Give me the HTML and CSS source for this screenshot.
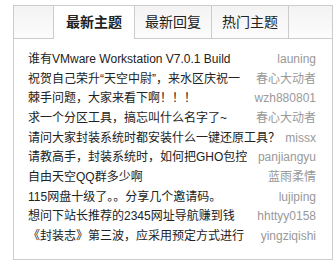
FILE: index.html
```html
<!DOCTYPE html>
<html lang="zh-CN">
<head>
<meta charset="utf-8">
<title>论坛主题</title>
<link rel="stylesheet" href="styles.css">
</head>
<body>
<div class="box">
  <div class="tabs">
    <div class="tab-spacer"></div>
    <div class="tab tab-first active">最新主题</div>
    <div class="tab">最新回复</div>
    <div class="tab">热门主题</div>
  </div>
  <ul class="list">
    <li class="row"><span class="title">谁有VMware Workstation V7.0.1 Build</span><span class="author">launing</span></li>
    <li class="row"><span class="title">祝贺自己荣升“天空中尉”，来水区庆祝一</span><span class="author">春心大动者</span></li>
    <li class="row"><span class="title">棘手问题，大家来看下啊！！！</span><span class="author">wzh880801</span></li>
    <li class="row"><span class="title">求一个分区工具，搞忘叫什么名字了~</span><span class="author">春心大动者</span></li>
    <li class="row"><span class="title">请问大家封装系统时都安装什么一键还原工具？</span><span class="author">missx</span></li>
    <li class="row"><span class="title">请教高手，封装系统时，如何把GHO包控</span><span class="author">panjiangyu</span></li>
    <li class="row"><span class="title">自由天空QQ群多少啊</span><span class="author">蓝雨柔情</span></li>
    <li class="row"><span class="title">115网盘十级了。。分享几个邀请码。</span><span class="author">lujiping</span></li>
    <li class="row"><span class="title">想问下站长推荐的2345网址导航赚到钱</span><span class="author">hhttyy0158</span></li>
    <li class="row"><span class="title">《封装志》第三波，应采用预定方式进行</span><span class="author">yingziqishi</span></li>
  </ul>
</div>
</body>
</html>
```

FILE: styles.css
```css
html, body {
  margin: 0;
  padding: 0;
  background: #fff;
}
body {
  font-family: "Liberation Sans", "Noto Sans CJK SC", sans-serif;
  font-size: 12px;
  color: #222;
}
.box {
  width: 318px;
  height: 253px;
  margin: 5px 0 0 13px;
  border: 1px solid #cccccc;
}
.tabs {
  display: flex;
  height: 32px;
  border-bottom: 1px solid #cccccc;
  background: linear-gradient(#f3f3f3, #fcfcfc);
}
.tab-spacer {
  width: 39px;
}
.tab {
  width: 76px;
  height: 32px;
  line-height: 32px;
  text-align: center;
  font-size: 14px;
  color: #222;
  border-right: 1px solid #cccccc;
}
.tab-first {
  width: 80px;
  border-left: 1px solid #cccccc;
}
.tab.active {
  background: #fff;
  font-weight: bold;
  height: 33px;
  margin-bottom: -1px;
}
.list {
  list-style: none;
  margin: 0;
  padding: 11px 16px 0 14px;
}
.row {
  display: flex;
  justify-content: space-between;
  line-height: 19.67px;
  height: 19.67px;
  white-space: nowrap;
}
.title {
  overflow: hidden;
  color: #222;
}
.author {
  color: #999;
  flex-shrink: 0;
  padding-left: 6px;
}
```
